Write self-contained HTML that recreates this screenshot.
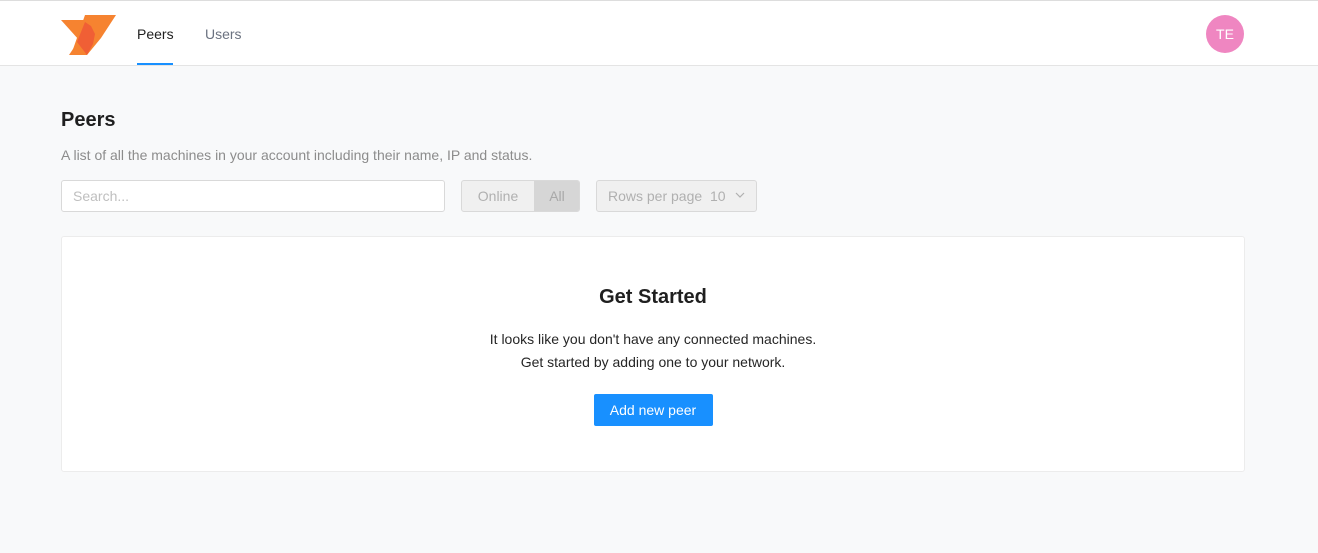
<!DOCTYPE html>
<html><head><style>
*{box-sizing:border-box;margin:0;padding:0}
body{width:1318px;height:553px;background:#f8f9fa;font-family:"Liberation Sans",sans-serif;position:relative;overflow:hidden}
.hdr{position:absolute;left:0;top:0;width:1318px;height:66px;background:#fff;border-top:1px solid #ddd;border-bottom:1px solid #e4e4e4}
.nav{position:absolute;top:25px;font-size:14px}
.ab{position:absolute}
</style></head><body>
<div class="hdr">
<svg class="ab" style="left:61px;top:13px" width="56" height="41" viewBox="0 0 56 41">
<polygon points="0,6 24,6 28,12 22,28 12,41 8,41 18,26" fill="#f68330"/>
<polygon points="24,1 55,1 40,24 26,41 10,41" fill="#f68330"/>
<polygon points="16,28 24,8 30,12 34,20 32,30 26,41" fill="#f05f35"/>
</svg>
<div class="nav" style="left:137px;color:#1f1f1f">Peers</div>
<div class="ab" style="left:137px;top:62px;width:36px;height:2px;background:#1890ff"></div>
<div class="nav" style="left:205px;color:#6b7280">Users</div>
<div class="ab" style="left:1206px;top:14px;width:38px;height:38px;border-radius:50%;background:#ef86c1;color:#fff;font-size:14px;text-align:center;line-height:38px">TE</div>
</div>
<div class="ab" style="left:61px;top:109px;font-size:20px;font-weight:bold;color:#1f1f1f">Peers</div>
<div class="ab" style="left:61px;top:147px;font-size:14px;color:#8c8c8c">A list of all the machines in your account including their name, IP and status.</div>
<div class="ab" style="left:61px;top:180px;width:384px;height:32px;background:#fff;border:1px solid #d9d9d9;border-radius:3px;font-size:14px;color:#bfbfbf;padding:7px 11px">Search...</div>
<div class="ab" style="left:461px;top:180px;width:119px;height:32px;border:1px solid #d9d9d9;border-radius:3px;background:#f0f0f0;font-size:14px;color:#b0b0b0;overflow:hidden">
<span class="ab" style="left:0;top:0;width:72px;height:30px;line-height:30px;text-align:center">Online</span>
<span class="ab" style="left:72px;top:0;width:46px;height:30px;line-height:30px;text-align:center;background:#d6d6d6;color:#a8a8a8">All</span>
</div>
<div class="ab" style="left:596px;top:180px;width:161px;height:32px;border:1px solid #d9d9d9;border-radius:3px;background:#f0f0f0;font-size:14px;color:#b0b0b0;line-height:30px;padding-left:11px">Rows per page&nbsp;&nbsp;10
<svg class="ab" style="left:138px;top:11px" width="10" height="7" viewBox="0 0 10 7"><path d="M1 1l4 4 4-4" stroke="#b0b0b0" fill="none" stroke-width="1.2"/></svg></div>
<div class="ab" style="left:61px;top:236px;width:1184px;height:236px;background:#fff;border:1px solid #ececec;border-radius:3px;text-align:center">
<div style="margin-top:49px;font-size:20px;font-weight:bold;color:#1f1f1f">Get Started</div>
<div style="margin-top:19px;font-size:14px;line-height:23px;color:#262626">It looks like you don't have any connected machines.<br>Get started by adding one to your network.</div>
<div style="display:inline-block;margin-top:20px;width:119px;height:32px;background:#1890ff;color:#fff;border-radius:2px;font-size:14px;line-height:32px">Add new peer</div>
</div>
</body></html>
